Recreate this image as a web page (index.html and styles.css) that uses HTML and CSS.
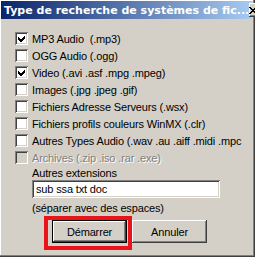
FILE: index.html
```html
<!DOCTYPE html>
<html lang="fr">
    <head>
        <meta charset="UTF-8" />
        <title>Type de recherche de systèmes de fichiers</title>
        <link rel="stylesheet" href="styles.css">
    </head>
    <body>
        <div class="window">
            <div class="titlebar">
                <span class="title">Type de recherche de systèmes de fic...</span>
                <span class="close">
                    <svg width="8" height="7" viewBox="0 0 8 7">
                        <path d="M0 0h2v1h-2zM6 0h2v1h-2zM1 1h2v1h-2zM5 1h2v1h-2zM2 2h4v1h-4zM3 3h2v1h-2zM2 4h4v1h-4zM1 5h2v1h-2zM5 5h2v1h-2zM0 6h2v1h-2zM6 6h2v1h-2z" fill="#000"/>
                    </svg>
                </span>
            </div>
            <div class="content">
                <ul class="types">
                    <li class="opt"><span class="box"><svg class="tick" width="7" height="7" viewBox="0 0 7 7"><path d="M0 2l3 3 4-4M0 3l3 3 4-4M0 4l3 3 4-4" stroke="#000" stroke-width="1" fill="none"/></svg></span><span class="text">MP3 Audio&nbsp; (.mp3)</span></li>
                    <li class="opt"><span class="box"></span><span class="text">OGG Audio (.ogg)</span></li>
                    <li class="opt"><span class="box"><svg class="tick" width="7" height="7" viewBox="0 0 7 7"><path d="M0 2l3 3 4-4M0 3l3 3 4-4M0 4l3 3 4-4" stroke="#000" stroke-width="1" fill="none"/></svg></span><span class="text">Video (.avi .asf .mpg .mpeg)</span></li>
                    <li class="opt"><span class="box"></span><span class="text">Images (.jpg .jpeg .gif)</span></li>
                    <li class="opt"><span class="box"></span><span class="text">Fichiers Adresse Serveurs (.wsx)</span></li>
                    <li class="opt"><span class="box"></span><span class="text">Fichiers profils couleurs WinMX (.clr)</span></li>
                    <li class="opt"><span class="box"></span><span class="text">Autres Types Audio (.wav .au .aiff .midi .mpc</span></li>
                    <li class="opt disabled"><span class="box"></span><span class="text">Archives (.zip .iso .rar .exe)</span></li>
                </ul>
                <div class="extra">
                    <div class="label">Autres extensions</div>
                    <div class="field">sub ssa txt doc</div>
                    <div class="label">(séparer avec des espaces)</div>
                </div>
                <div class="actions">
                    <span class="btn default">Démarrer<span class="highlight"></span></span>
                    <span class="btn">Annuler</span>
                </div>
            </div>
        </div>
    </body>
</html>
```

FILE: styles.css
```css
body {
    margin: 0;
    font-family: "Liberation Sans", Arial, sans-serif;
    font-size: 11px;
    letter-spacing: -0.15px;
    color: #000;
}
.window {
    width: 255px;
    height: 257px;
    box-sizing: border-box;
    background-color: #d4d0c8;
    border-right: 1px solid #404040;
    border-bottom: 1px solid #404040;
    box-shadow: inset -1px -1px #808080, inset 1px 1px #fff;
    padding: 1px 3px 3px 1px;
}
.titlebar {
    height: 18px;
    display: flex;
    align-items: center;
    justify-content: space-between;
    padding: 0 2px 0 3px;
    background: linear-gradient(to right, #0a246a, #a6caf0);
}
.title {
    color: #fff;
    font-family: "DejaVu Sans", sans-serif;
    font-weight: bold;
    font-size: 11px;
    letter-spacing: 0;
    white-space: nowrap;
}
.close {
    width: 16px;
    height: 14px;
    box-sizing: border-box;
    display: flex;
    align-items: center;
    justify-content: center;
    background-color: #d4d0c8;
    box-shadow: inset -1px -1px #404040, inset 1px 1px #fff, inset -2px -2px #808080;
}
.content {
    padding: 11px 0 0 14px;
}
.types {
    list-style: none;
    margin: 0;
    padding: 0;
}
.opt {
    height: 17px;
    display: flex;
    align-items: center;
    gap: 4px;
    white-space: nowrap;
}
.box {
    width: 13px;
    height: 13px;
    box-sizing: border-box;
    display: flex;
    align-items: center;
    justify-content: center;
    background-color: #fff;
    box-shadow: inset 1px 1px #808080, inset -1px -1px #fff, inset 2px 2px #404040, inset -2px -2px #d4d0c8;
}
.disabled .box {
    background-color: #d4d0c8;
}
.disabled .text {
    color: #808080;
    text-shadow: 1px 1px #fff;
}
.extra {
    padding-left: 17px;
    width: 188px;
}
.label {
    height: 14px;
    line-height: 14px;
    white-space: nowrap;
}
.field {
    height: 18px;
    box-sizing: border-box;
    padding: 0 4px;
    line-height: 18px;
    background-color: #fff;
    box-shadow: inset 1px 1px #808080, inset -1px -1px #fff, inset 2px 2px #404040, inset -2px -2px #d4d0c8;
    margin-bottom: 3px;
}
.actions {
    display: flex;
    gap: 5px;
    padding: 5px 0 0 37px;
}
.btn {
    position: relative;
    width: 75px;
    height: 23px;
    box-sizing: border-box;
    display: flex;
    align-items: center;
    justify-content: center;
    box-shadow: inset -1px -1px #404040, inset 1px 1px #fff, inset -2px -2px #808080;
}
.btn.default {
    border: 1px solid #000;
}
.highlight {
    position: absolute;
    left: -9px;
    top: -5px;
    width: 88px;
    height: 34px;
    box-sizing: border-box;
    border: 4px solid #e8141a;
}
```
